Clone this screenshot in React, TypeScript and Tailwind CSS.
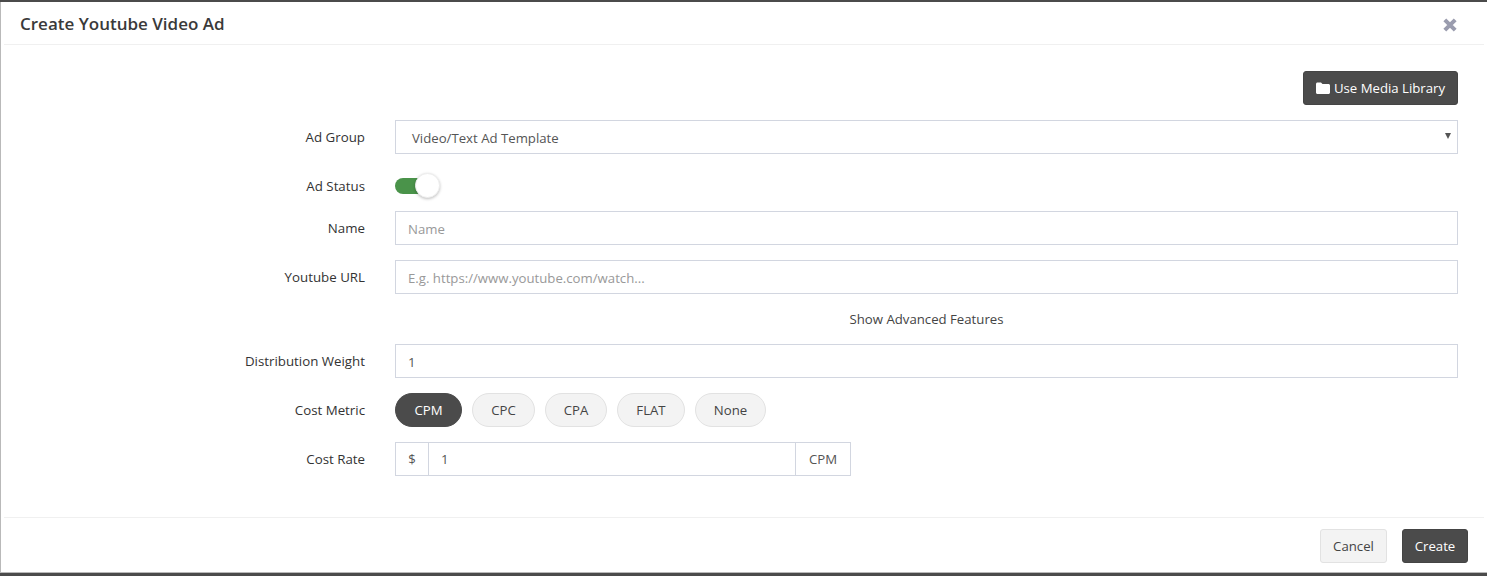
import { FC, ReactNode } from "react";

const inputClass =
  "h-[34px] w-full border border-[#d2d6e0] bg-white px-3 pt-[2px] text-[13.2px] text-[#555] outline-none placeholder:text-[#999]";

const Row: FC<{ label: string; className?: string; children: ReactNode }> = ({ label, className, children }) => (
  <div className={`flex items-center ${className ?? ""}`}>
    <label className="w-[361px] shrink-0 pt-[2px] text-right text-[13.3px] text-[#333]">{label}</label>
    <div className="ml-[30px] min-w-0 flex-1">{children}</div>
  </div>
);

const metrics = ["CPM", "CPC", "CPA", "FLAT", "None"];
const metricWidths: Record<string, string> = {
  CPM: "w-[67px]",
  CPC: "w-[63px]",
  CPA: "w-[62px]",
  FLAT: "w-[68px]",
  None: "w-[71px]",
};

export default function App() {
  return (
    <div className="flex h-[576px] flex-col overflow-hidden bg-white font-['Open_Sans',sans-serif] text-[13.3px] text-[#333]">
      <div className="h-[2px] shrink-0 bg-[#4b4b4b]" />
      <div className="flex min-h-0 flex-1 flex-col border-l border-[#b9b9b9] pl-[3px] pr-[3px]">
        <div className="flex h-[43px] shrink-0 items-center justify-between border-b border-[#f0f0f0] pl-[16px] pr-[26px]">
          <h4 className="mt-[2px] text-[17px] font-semibold text-[#3a3a3a]">Create Youtube Video Ad</h4>
          <svg width="16" height="16" viewBox="0 0 16 16" className="mt-[4px]">
            <path d="M2.8 2.8 L13.2 13.2 M13.2 2.8 L2.8 13.2" stroke="#9a9cae" strokeWidth="4" />
          </svg>
        </div>

        <div className="flex-1 pr-[26px]">
          <div className="mt-[26px] flex justify-end">
            <button className="flex h-[34px] w-[155px] items-center justify-center gap-[4px] rounded-[3px] border border-[#444] bg-[#4b4b4b] text-[13.2px] text-white">
              <svg width="14" height="12" viewBox="0 0 14 12">
                <path
                  d="M1.5 0.5 H5 L6.5 2 H12.5 C13.3 2 14 2.7 14 3.5 V10.5 C14 11.3 13.3 12 12.5 12 H1.5 C0.7 12 0 11.3 0 10.5 V2 C0 1.2 0.7 0.5 1.5 0.5 Z"
                  fill="#fff"
                />
              </svg>
              <span className="pt-[2px]">Use Media Library</span>
            </button>
          </div>

          <Row label="Ad Group" className="mt-[15px]">
            <div className="relative">
              <div className="flex h-[34px] items-center border border-[#d2d6e0] pl-[16px] pt-[3px] text-[13.2px] text-[#555]">
                Video/Text Ad Template
              </div>
              <span className="absolute right-[7px] top-[13px] h-0 w-0 border-x-[3px] border-t-[6px] border-x-transparent border-t-[#555]" />
            </div>
          </Row>

          <Row label="Ad Status" className="mt-[15px] h-[34px]">
            <div className="relative h-[28px] w-[46px]">
              <div className="absolute left-0 top-[6px] h-[16px] w-[30px] rounded-full bg-[#4a934a]" />
              <div className="absolute left-[20px] top-[1px] h-[25px] w-[25px] rounded-full border border-[#eee] bg-white shadow-[0_1px_3px_rgba(0,0,0,0.25)]" />
            </div>
          </Row>

          <Row label="Name" className="mt-[8px]">
            <input className={inputClass} placeholder="Name" />
          </Row>

          <Row label="Youtube URL" className="mt-[15px]">
            <input className={inputClass} placeholder="E.g. https://www.youtube.com/watch..." />
          </Row>

          <div className="ml-[391px] mt-[15px] h-[20px] text-center text-[13.2px] leading-[20px] text-[#444]">
            Show Advanced Features
          </div>

          <Row label="Distribution Weight" className="mt-[15px]">
            <input className={inputClass} defaultValue="1" />
          </Row>

          <Row label="Cost Metric" className="mt-[15px]">
            <div className="flex gap-[10px]">
              {metrics.map((m, i) => (
                <button
                  key={m}
                  className={`h-[34px] rounded-full border pt-[2px] text-[13.2px] ${metricWidths[m]} ${
                    i === 0
                      ? "border-[#4b4b4b] bg-[#4b4b4b] text-white"
                      : "border-[#e2e2e2] bg-[#f3f3f3] text-[#444]"
                  }`}
                >
                  {m}
                </button>
              ))}
            </div>
          </Row>

          <Row label="Cost Rate" className="mt-[15px]">
            <div className="flex h-[34px] w-[456px] border border-[#d2d6e0] text-[13.2px] text-[#555]">
              <span className="flex w-[33px] items-center justify-center border-r border-[#d2d6e0] pt-[2px]">$</span>
              <input className="min-w-0 flex-1 px-3 pt-[2px] text-[13.2px] text-[#555] outline-none" defaultValue="1" />
              <span className="flex w-[55px] items-center justify-center border-l border-[#d2d6e0] pt-[2px]">CPM</span>
            </div>
          </Row>
        </div>

        <div className="flex h-[55px] shrink-0 items-start justify-end gap-[15px] border-t border-[#f0f0f0] pr-[16px] pt-[11px]">
          <button className="h-[34px] w-[67px] rounded-[3px] border border-[#e2e2e2] bg-[#f3f3f3] pt-[2px] text-[13.2px] text-[#444]">
            Cancel
          </button>
          <button className="h-[34px] w-[66px] rounded-[3px] border border-[#444] bg-[#4b4b4b] pt-[2px] text-[13.2px] text-white">
            Create
          </button>
        </div>
      </div>
      <div className="h-[4px] shrink-0 border-t border-[#b9b9b9] bg-[#4b4b4b]" />
    </div>
  );
}
